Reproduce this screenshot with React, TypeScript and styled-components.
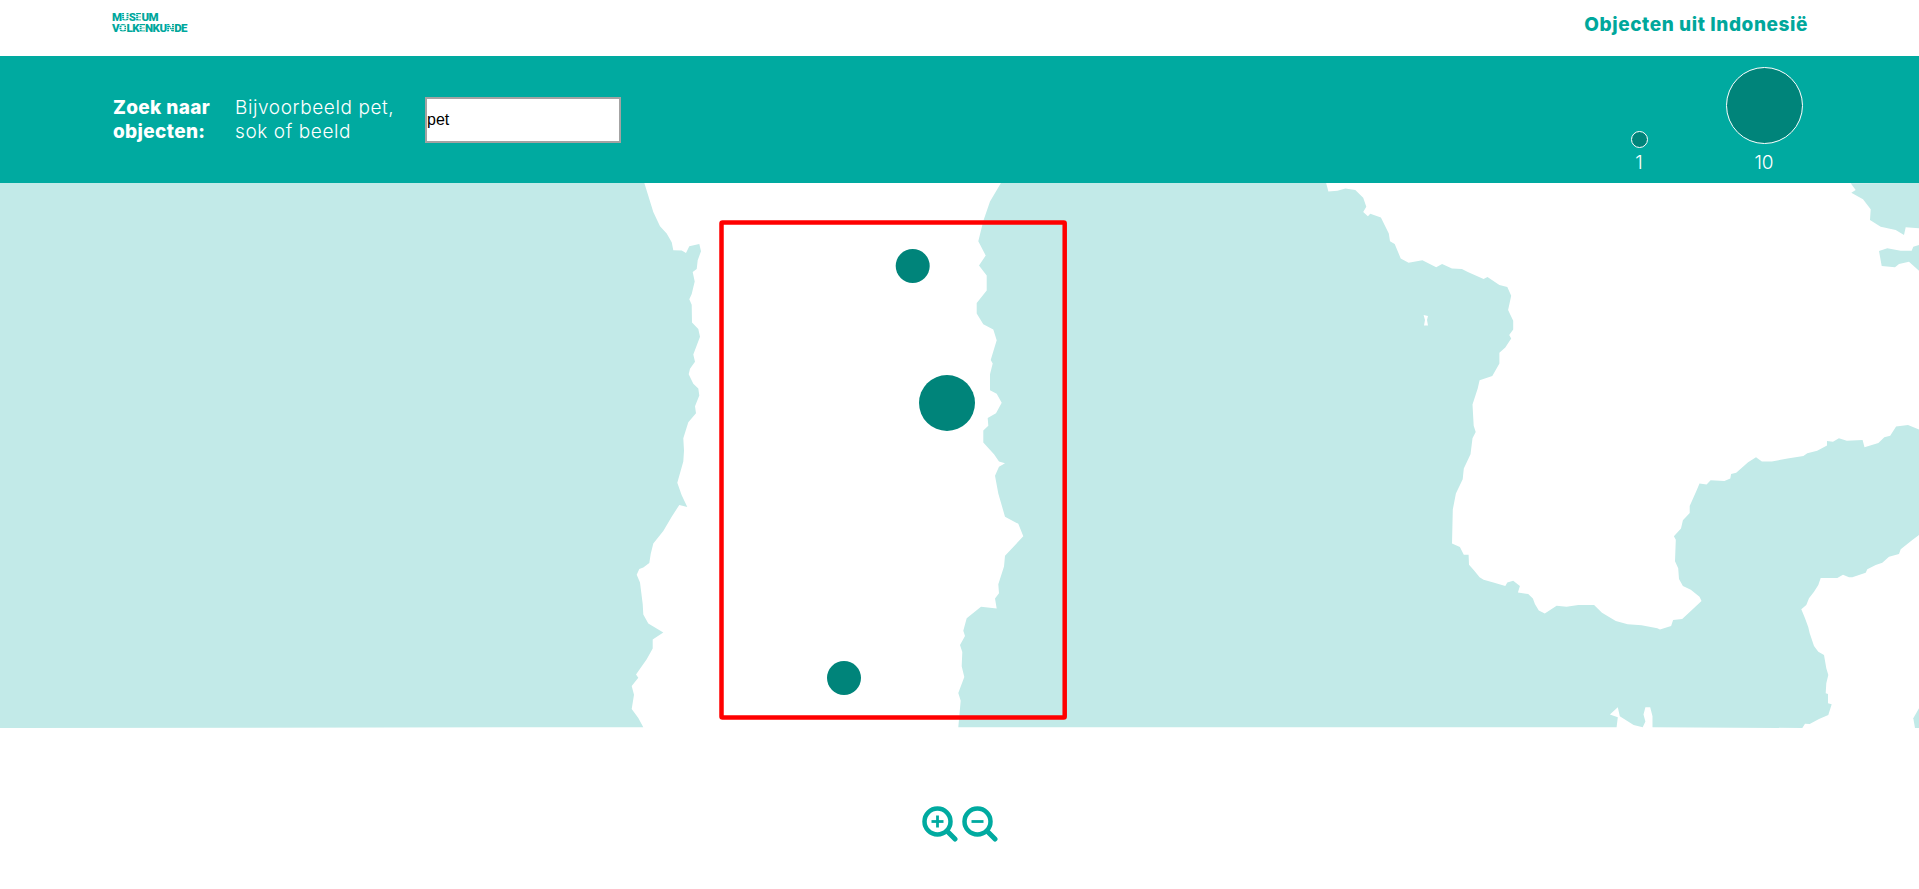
import React from "react";
import styled, { createGlobalStyle } from "styled-components";

type Pt = [number, number];

// coastlines were traced on crops, so each list is placed back on the page by its crop origin and scale
const place = (pts: Pt[], ox: number, oy: number, sx: number, sy: number): Pt[] =>
  pts.map(([x, y]) => [ox + x / sx, oy + y / sy]);

const toPath = (pts: Pt[]) =>
  "M" + pts.map(([x, y]) => `${x.toFixed(1)} ${y.toFixed(1)}`).join("L") + "Z";

const leftCoast: Pt[] = [
  [133, 8], [160, 90], [180, 130], [200, 150], [215, 175], [220, 197], [245, 198], [258, 205], [268, 186], [298, 180],
  [303, 200], [293, 225], [290, 250], [278, 258], [284, 285], [275, 320], [268, 335], [275, 350], [276, 400], [295, 418],
  [300, 440], [280, 490], [285, 510], [270, 530], [266, 545], [280, 572], [295, 585], [298, 605], [285, 635], [288, 655],
  [265, 680], [250, 725], [252, 760], [250, 790], [232, 850], [245, 885], [262, 918], [238, 912], [215, 945], [190, 985],
  [160, 1020], [152, 1050], [148, 1075], [130, 1088], [118, 1092], [110, 1108], [120, 1130], [128, 1190], [130, 1220], [145, 1245],
  [190, 1270], [158, 1290], [158, 1315], [140, 1345], [108, 1388], [115, 1397], [95, 1420], [102, 1445], [95, 1485], [115, 1510],
  [130, 1536],
];

const westCoast: Pt[] = [
  [1203, 8], [1170, 60], [1150, 115], [1135, 172], [1157, 212], [1137, 240], [1160, 268], [1160, 310], [1130, 345], [1130, 375],
  [1150, 405], [1180, 420], [1190, 450], [1172, 505], [1178, 515], [1170, 545], [1170, 590], [1190, 600], [1205, 625], [1188, 655],
  [1163, 668], [1165, 690], [1150, 703], [1150, 737], [1182, 770], [1197, 790], [1215, 795], [1197, 805], [1185, 830], [1195, 880],
  [1215, 945], [1255, 965], [1270, 1000], [1240, 1030], [1215, 1055], [1212, 1085], [1195, 1135], [1197, 1160], [1185, 1175], [1190, 1203],
  [1143, 1198], [1100, 1230], [1090, 1265], [1095, 1280], [1080, 1305], [1087, 1325], [1085, 1365], [1093, 1395], [1075, 1440], [1082, 1462],
  [1075, 1536],
];

const northCoast: Pt[] = [
  [66, 8], [72, 32], [95, 30], [115, 24], [140, 28], [160, 50], [168, 75], [160, 90], [172, 102], [178, 95],
  [205, 105], [225, 150], [228, 172], [240, 180], [255, 220], [275, 232], [310, 225], [345, 245], [360, 236], [385, 248],
  [410, 250], [425, 258], [465, 278], [475, 272], [505, 295], [525, 300], [535, 325], [527, 365], [540, 395], [540, 420],
  [530, 435], [535, 445], [520, 470], [505, 485], [505, 515], [487, 550], [455, 562], [450, 585], [437, 630], [440, 690],
  [445, 707], [437, 725], [432, 770], [415, 810], [412, 840], [395, 880], [387, 925], [385, 1020], [405, 1030], [415, 1052],
  [427, 1052], [428, 1080], [440, 1095], [455, 1115], [465, 1122], [490, 1130], [520, 1140], [525, 1130], [540, 1125], [557, 1140],
  [552, 1158], [578, 1162], [590, 1175], [595, 1190], [605, 1208], [620, 1217], [650, 1195], [675, 1198], [705, 1193], [745, 1193],
  [765, 1215], [800, 1238], [830, 1247], [865, 1250], [905, 1258], [912, 1262], [940, 1252], [945, 1235], [968, 1232], [990, 1210],
  [1017, 1182], [1012, 1170], [990, 1150], [970, 1140], [960, 1120], [958, 1090], [950, 1070], [952, 1010], [947, 1000], [965, 978],
  [970, 955], [987, 935], [987, 915], [1005, 870], [1012, 852], [1030, 855], [1040, 843], [1075, 845], [1090, 838], [1092, 825],
  [1105, 822], [1135, 792], [1155, 778], [1170, 790], [1195, 790], [1235, 782], [1275, 775], [1285, 767], [1310, 760], [1335, 745],
  [1335, 733], [1350, 735], [1365, 725], [1385, 732], [1425, 730], [1430, 750], [1465, 738], [1480, 722], [1495, 718], [1510, 692],
  [1540, 688], [1568, 700],
];

const eastCoast: Pt[] = [
  [580, 0], [545, 28], [540, 42], [510, 50], [490, 68], [470, 75], [445, 88], [440, 98], [400, 112], [390, 112],
  [372, 104], [355, 114], [305, 114], [298, 135], [285, 155], [270, 175], [262, 195], [247, 208], [258, 235], [268, 262],
  [272, 280], [285, 318], [298, 335], [315, 345], [322, 385], [328, 405], [322, 430], [320, 460], [327, 462], [327, 490],
  [338, 493], [328, 525], [300, 537], [272, 552], [258, 551], [250, 564],
];

const southNotch: Pt[] = [
  [893, 1536], [893, 1505], [887, 1480], [875, 1480], [870, 1500], [875, 1520], [868, 1536], [845, 1530], [810, 1505], [805, 1480],
  [785, 1500], [805, 1508], [802, 1536],
];

const mainland: Pt[] = [
  ...place(northCoast, 1300, 180, 2.533, 2.807),
  [1919, 429],
  [1919, 535],
  ...place(eastCoast, 1719, 540, 3, 3),
  ...place(southNotch, 1300, 180, 2.533, 2.807),
  ...place([...westCoast].reverse(), 600, 180, 3, 2.807),
];

const leftLand: Pt[] = [[0, 183], ...place(leftCoast, 600, 180, 3, 2.807), [0, 728]];

const lake: Pt[] = [[1423.6, 315], [1428, 316], [1427, 320], [1428, 325.5], [1424, 325.5], [1425, 320]];

const northIsland: Pt[] = [
  ...place(
    [[395, 10], [410, 30], [397, 38], [432, 58], [455, 88], [453, 120], [485, 140], [530, 150], [555, 165], [560, 142], [600, 145]],
    1719, 180, 3, 3,
  ),
  [1919, 183],
];

const smallIsland: Pt[] = place(
  [[600, 195], [583, 200], [578, 212], [545, 212], [505, 205], [480, 213], [488, 258], [528, 262], [540, 252], [570, 245], [600, 272]],
  1719, 180, 3, 3,
);

const cornerLand: Pt[] = place([[600, 505], [583, 535], [588, 564], [600, 564]], 1719, 540, 3, 3);

const GlobalStyle = createGlobalStyle`
  html, body {
    margin: 0;
    padding: 0;
    background: #fff;
    overflow: hidden;
  }
`;

const Page = styled.div`
  width: 1919px;
  height: 889px;
  font-family: Inter, "Noto Sans", sans-serif;
`;

const Header = styled.header`
  height: 56px;
  padding: 0 111px 0 112px;
  display: flex;
  justify-content: space-between;
  align-items: center;
  box-sizing: border-box;
`;

const Logo = styled.div`
  font-family: Roboto, sans-serif;
  font-size: 11.5px;
  font-weight: 900;
  line-height: 11px;
  color: #00a79c;
  margin-top: -11px;
`;

const LogoRow = styled.div`
  letter-spacing: -0.5px;
  white-space: nowrap;
`;

const Faded = styled.span`
  background: repeating-linear-gradient(0deg, #00a79c 0 1px, #a5e0db 1px 2px);
  -webkit-background-clip: text;
  background-clip: text;
  color: transparent;
`;

const Title = styled.div`
  font-size: 19px;
  font-weight: 800;
  color: #00a79c;
  letter-spacing: 0.58px;
  margin-top: -8px;
`;

const SearchBand = styled.section`
  height: 127px;
  padding: 0 112px 0 113px;
  background: #00aaa0;
  display: flex;
  align-items: center;
  box-sizing: border-box;
  color: #fff;
`;

const SearchLabel = styled.label`
  width: 122px;
  font-size: 19px;
  font-weight: 800;
  letter-spacing: 0.35px;
  line-height: 24px;
`;

const SearchHint = styled.div`
  width: 190px;
  font-size: 19px;
  font-weight: 300;
  letter-spacing: 0.6px;
  line-height: 24px;
`;

const SearchInput = styled.input`
  width: 196px;
  height: 46px;
  padding: 0;
  box-sizing: border-box;
  border: 2px solid #a3a3a3;
  background: #fff;
  color: #000;
  font-family: "Liberation Sans", Arial, sans-serif;
  font-size: 16px;
`;

const Legend = styled.div`
  margin-left: auto;
  align-self: flex-end;
  display: flex;
  align-items: flex-end;
  gap: 62px;
  padding-bottom: 9px;
`;

const LegendItem = styled.div<{ $width: number; $gap: number }>`
  width: ${(p) => p.$width}px;
  display: flex;
  flex-direction: column;
  align-items: center;
  gap: ${(p) => p.$gap}px;
`;

const LegendDot = styled.div<{ $size: number }>`
  width: ${(p) => p.$size}px;
  height: ${(p) => p.$size}px;
  box-sizing: border-box;
  border: 1.5px solid #fff;
  border-radius: 50%;
  background: #00847a;
`;

const LegendValue = styled.div`
  font-size: 19px;
  font-weight: 300;
  line-height: 22px;
`;

const MapCanvas = styled.svg`
  display: block;
  width: 1919px;
  height: 545px;
`;

const Land = styled.path`
  fill: #c2eae8;
  fill-rule: evenodd;
`;

const Marker = styled.circle`
  fill: #00847a;
`;

const Selection = styled.rect`
  fill: none;
  stroke: #ff0000;
  stroke-width: 4.5px;
  stroke-linejoin: round;
`;

const ZoomBar = styled.div`
  display: flex;
  justify-content: center;
  gap: 4px;
  padding-top: 78px;
`;

const ZoomButton = styled.button`
  width: 36px;
  height: 36px;
  padding: 0;
  border: 0;
  background: none;
  cursor: pointer;
`;

const ZoomIcon = ({ plus }: { plus?: boolean }) => (
  <svg width="36" height="36" viewBox="0 0 36 36" fill="none" stroke="#00aaa0" strokeLinecap="round">
    <circle cx="15.5" cy="15.5" r="13" strokeWidth="4.5" />
    <path d="M25.5 25.5L33 33" strokeWidth="5" />
    <path d="M9.5 15.5h12" strokeWidth="2.8" strokeLinecap="butt" />
    {plus && <path d="M15.5 9.5v12" strokeWidth="2.8" strokeLinecap="butt" />}
  </svg>
);

const App = () => {
  return (
    <Page>
      <GlobalStyle />
      <Header>
        <Logo>
          <LogoRow>
            M<Faded>U</Faded>S<Faded>E</Faded>UM
          </LogoRow>
          <LogoRow>
            V<Faded>O</Faded>LK<Faded>E</Faded>NKU<Faded>N</Faded>DE
          </LogoRow>
        </Logo>
        <Title>Objecten uit Indonesië</Title>
      </Header>

      <SearchBand>
        <SearchLabel htmlFor="zoek">
          Zoek naar
          <br />
          objecten:
        </SearchLabel>
        <SearchHint>
          Bijvoorbeeld pet,
          <br />
          sok of beeld
        </SearchHint>
        <SearchInput id="zoek" type="text" defaultValue="pet" />
        <Legend>
          <LegendItem $width={40} $gap={4}>
            <LegendDot $size={17} />
            <LegendValue>1</LegendValue>
          </LegendItem>
          <LegendItem $width={86} $gap={8}>
            <LegendDot $size={77} />
            <LegendValue>10</LegendValue>
          </LegendItem>
        </Legend>
      </SearchBand>

      <MapCanvas viewBox="0 183 1919 545">
        <Land d={toPath(leftLand)} />
        <Land d={toPath(mainland) + toPath(lake)} />
        <Land d={toPath(northIsland)} />
        <Land d={toPath(smallIsland)} />
        <Land d={toPath(cornerLand)} />
        <Marker cx="912.7" cy="266" r="17" />
        <Marker cx="947" cy="403" r="28" />
        <Marker cx="844" cy="678" r="17" />
        <Selection x="721.5" y="222.5" width="343.2" height="495" rx="1" />
      </MapCanvas>

      <ZoomBar>
        <ZoomButton aria-label="Inzoomen">
          <ZoomIcon plus />
        </ZoomButton>
        <ZoomButton aria-label="Uitzoomen">
          <ZoomIcon />
        </ZoomButton>
      </ZoomBar>
    </Page>
  );
};

export default App;
